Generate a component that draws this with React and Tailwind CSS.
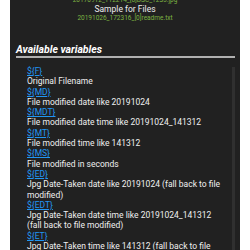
const vars = [
  ['${F}', 'Original Filename'],
  ['${MD}', 'File modified date like 20191024'],
  ['${MDT}', 'File modified date time like 20191024_141312'],
  ['${MT}', 'File modified time like 141312'],
  ['${MS}', 'File modified in seconds'],
  ['${ED}', 'Jpg Date-Taken date like 20191024 (fall back to file modified)'],
  ['${EDT}', 'Jpg Date-Taken date time like 20191024_141312 (fall back to file modified)'],
  ['${ET}', 'Jpg Date-Taken time like 141312 (fall back to file modified)'],
];

export default function App() {
  return (
    <div className="w-[250px] h-[250px] bg-white px-[10px] overflow-hidden" style={{ fontFamily: 'Roboto, "Noto Sans", sans-serif' }}>
      <div className="h-full bg-[#212121] flex flex-col">
        <div className="flex flex-col items-center -mt-[4px]">
          <div className="text-[6.5px] leading-[8.5px] text-[#7cb342]">20170912_112214_[0]DSC_1235.jpg</div>
          <div className="text-[8.5px] leading-[9px] text-[#eeeeee]">Sample for Files</div>
          <div className="text-[6.5px] leading-[8.5px] text-[#7cb342]">20191026_172316_[0]readme.txt</div>
        </div>
        <div className="mt-[21px] ml-[6px] text-[10.5px] leading-[13px] font-bold italic text-white">Available variables</div>
        <div className="ml-[6px] mr-[5px] h-[2px] bg-[#b0b0b0]" />
        <div className="flex flex-1 min-h-0 mt-[8px]">
          <div className="flex-1 pl-[17px] pr-[10px] text-[8.5px] leading-[10.3px] text-[#f0f0f0]">
            {vars.map(([k, d]) => (
              <div key={k}>
                <div className="text-[#2196f3] underline">{k}</div>
                <div>{d}</div>
              </div>
            ))}
          </div>
          <div className="w-[3px] mr-[5px] mt-[1px] bg-[#303030]" />
        </div>
      </div>
    </div>
  );
}
